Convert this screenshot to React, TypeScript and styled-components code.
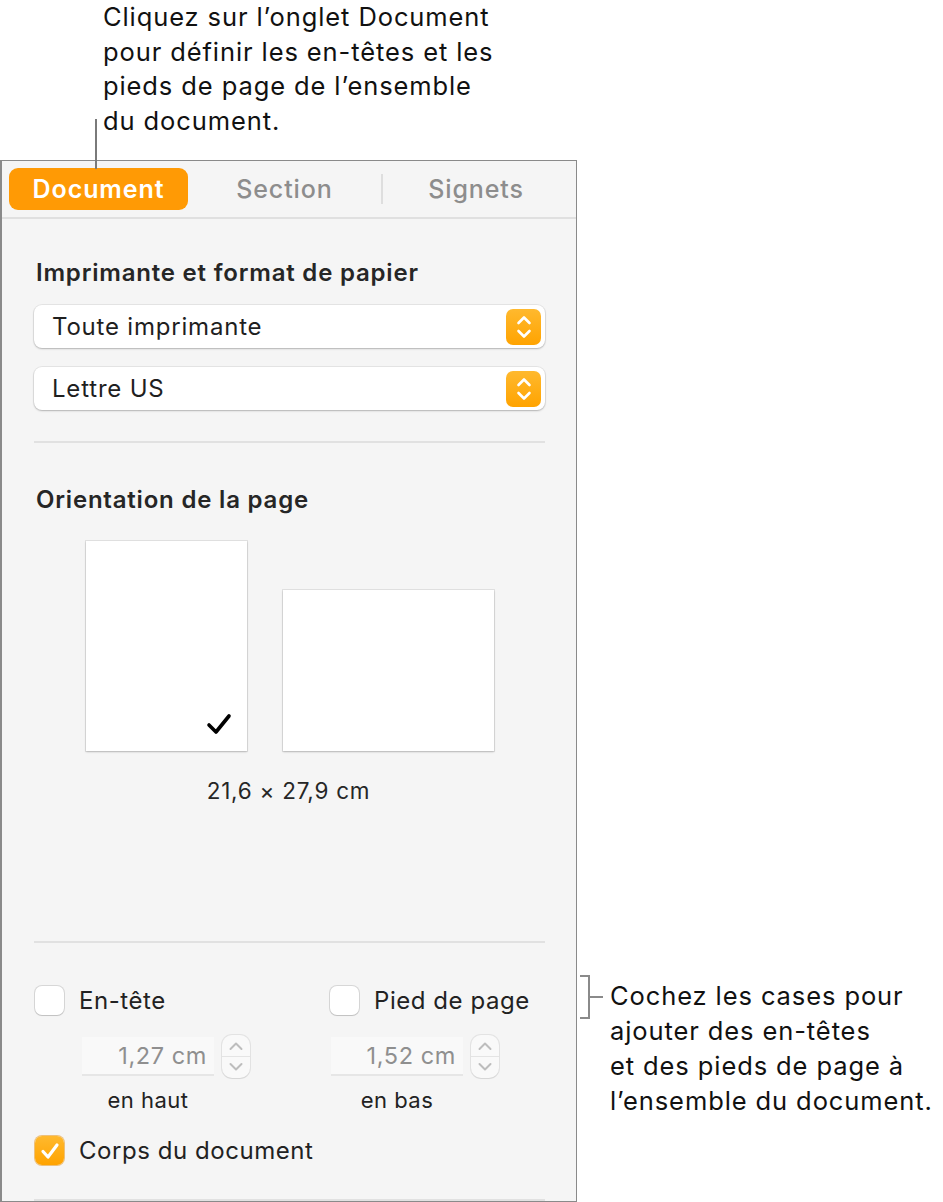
import React from "react";
import styled, { createGlobalStyle } from "styled-components";

const Global = createGlobalStyle`
  html, body { margin: 0; padding: 0; background: #ffffff; }
  body { font-family: Inter, "Noto Sans", "Liberation Sans", sans-serif; color: #1c1c1c; }
  * { box-sizing: border-box; }
`;

const Figure = styled.div`
  position: relative;
  width: 943px;
  height: 1202px;
  overflow: hidden;
  background: #ffffff;
`;

const CalloutText = styled.div<{ $pl?: number }>`
  font-size: 25.5px;
  line-height: 34.6px;
  color: #111;
  letter-spacing: 0.9px;
  padding-left: ${(p) => p.$pl ?? 0}px;
`;

const TopCallout = styled.div`
  height: 160px;
`;

const LeaderLine = styled.div`
  position: absolute;
  left: 95px;
  top: 119px;
  width: 2px;
  height: 50px;
  background: #7a7a7a;
`;

const Row = styled.div`
  display: flex;
  align-items: flex-start;
`;

const Panel = styled.div`
  width: 577px;
  height: 1042px;
  border: 1px solid #8a8a8a;
  border-left-width: 2px;
  background: #f5f5f5;
  display: flex;
  flex-direction: column;
`;

const TabBar = styled.div`
  display: grid;
  grid-template-columns: 179px 193px 2px 1fr;
  align-items: center;
  height: 58px;
  padding: 0 7px 0 7px;
  border-bottom: 2px solid #e0e0e0;
`;

const Tab = styled.div<{ $active?: boolean }>`
  height: 42px;
  display: flex;
  align-items: center;
  justify-content: center;
  font-size: 25px;
  letter-spacing: 0.9px;
  font-weight: ${(p) => (p.$active ? 600 : 500)};
  color: ${(p) => (p.$active ? "#ffffff" : "#8d8d8d")};
  background: ${(p) => (p.$active ? "#ff9a05" : "transparent")};
  border-radius: 9px;
`;

const TabDivider = styled.div`
  height: 30px;
  background: #dedede;
`;

const Body = styled.div`
  flex: 1;
  display: flex;
  flex-direction: column;
  padding: 0 31px 0 32px;
`;

const Heading = styled.div<{ $mt: number }>`
  font-size: 24px;
  font-weight: 600;
  letter-spacing: 0.8px;
  color: #262626;
  margin-top: ${(p) => p.$mt}px;
  line-height: 28px;
  padding-left: 2px;
`;

const Select = styled.div<{ $mt: number }>`
  margin-top: ${(p) => p.$mt}px;
  height: 43px;
  background: #ffffff;
  border-radius: 8px;
  box-shadow: 0 0 0 1px rgba(0, 0, 0, 0.06), 0 1px 2px rgba(0, 0, 0, 0.22);
  display: flex;
  align-items: center;
  justify-content: space-between;
  padding: 0 4px 0 18px;
  font-size: 24px;
  letter-spacing: 0.8px;
  color: #1f1f1f;
`;

const SelectStepper = styled.div`
  width: 35px;
  height: 36px;
  border-radius: 7px;
  background: linear-gradient(#ffb92e, #ffa300);
  display: flex;
  align-items: center;
  justify-content: center;
`;

const Divider = styled.div<{ $mt: number }>`
  margin-top: ${(p) => p.$mt}px;
  height: 2px;
  background: #e1e1e1;
`;

const Pages = styled.div`
  margin-top: 27px;
  display: flex;
  justify-content: center;
  align-items: flex-end;
  gap: 36px;
`;

const Page = styled.div<{ $w: number; $h: number }>`
  position: relative;
  width: ${(p) => p.$w}px;
  height: ${(p) => p.$h}px;
  background: #ffffff;
  box-shadow: 0 0 0 1px rgba(0, 0, 0, 0.08), 0 1px 2px rgba(0, 0, 0, 0.2);
`;

const Check = styled.svg`
  position: absolute;
  right: 15px;
  bottom: 15px;
`;

const Caption = styled.div`
  margin-top: 26px;
  text-align: center;
  font-size: 22.5px;
  letter-spacing: 0.75px;
  color: #262626;
  padding-right: 2px;
`;

const Spacer = styled.div`
  flex: 1;
`;

const OptionsGrid = styled.div`
  margin-top: 43px;
  display: grid;
  grid-template-columns: 295px 1fr;
`;

const OptionCol = styled.div`
  display: flex;
  flex-direction: column;
  align-items: flex-start;
`;

const CheckRow = styled.label<{ $mt?: number }>`
  display: flex;
  align-items: center;
  gap: 15px;
  margin-top: ${(p) => p.$mt ?? 0}px;
  font-size: 24px;
  letter-spacing: 0.55px;
  color: #222;
  padding-left: 1px;
  line-height: 29px;
`;

const Box = styled.span<{ $on?: boolean }>`
  width: 29px;
  height: 29px;
  border-radius: 7px;
  background: ${(p) => (p.$on ? "linear-gradient(#ffb92e, #ffa300)" : "#ffffff")};
  box-shadow: ${(p) =>
    p.$on
      ? "0 0 0 1px rgba(230,140,0,0.5)"
      : "0 0 0 1px rgba(0,0,0,0.12), 0 1px 1px rgba(0,0,0,0.1)"};
  display: flex;
  align-items: center;
  justify-content: center;
`;

const FieldBlock = styled.div<{ $ml: number }>`
  margin-top: 20px;
  margin-left: ${(p) => p.$ml}px;
  display: grid;
  grid-template-columns: 132px 28px;
  column-gap: 8px;
  align-items: center;
`;

const Field = styled.div`
  height: 39px;
  background: #f9f9f9;
  border-bottom: 2px solid #e6e6e6;
  display: flex;
  align-items: center;
  justify-content: flex-end;
  padding-right: 7px;
  font-size: 23.5px;
  letter-spacing: 0.6px;
  color: #8f8f8f;
`;

const MiniStepper = styled.div`
  height: 43px;
  border-radius: 10px;
  background: #f9f9f9;
  box-shadow: 0 0 0 1px rgba(0, 0, 0, 0.07), 0 1px 1px rgba(0, 0, 0, 0.06);
  display: flex;
  flex-direction: column;
  align-items: center;
  justify-content: space-around;
  position: relative;
  &::after {
    content: "";
    position: absolute;
    left: 0;
    right: 0;
    top: 21px;
    height: 1px;
    background: #e4e4e4;
  }
`;

const FieldLabel = styled.div`
  grid-column: 1;
  margin-top: 9px;
  text-align: center;
  font-size: 22px;
  letter-spacing: 0.5px;
  color: #222;
`;

const SideCallout = styled.div`
  margin-top: 814px;
  margin-left: 3px;
  display: flex;
  align-items: flex-start;
`;

const Bracket = styled.div`
  position: relative;
  width: 10px;
  height: 44px;
  margin-top: 1px;
  border: 2px solid #8a8a8a;
  border-left: none;
  &::after {
    content: "";
    position: absolute;
    left: 8px;
    top: 19px;
    width: 15px;
    height: 2px;
    background: #8a8a8a;
  }
`;

const SideText = styled(CalloutText)`
  margin-left: 20px;
  margin-top: 4px;
  line-height: 35px;
`;

const Chevrons = ({ color }: { color: string }) => (
  <svg width={18} height={28} viewBox="0 0 18 28" fill="none">
    <path d="M3.5 10 L9 4.5 L14.5 10" stroke={color} strokeWidth={2.6} strokeLinecap="round" strokeLinejoin="round" />
    <path d="M3.5 18 L9 23.5 L14.5 18" stroke={color} strokeWidth={2.6} strokeLinecap="round" strokeLinejoin="round" />
  </svg>
);

const Chevron = ({ up }: { up?: boolean }) => (
  <svg width={16} height={12} viewBox="0 0 16 12" fill="none">
    <path
      d={up ? "M2.5 9 L8 3.5 L13.5 9" : "M2.5 3 L8 8.5 L13.5 3"}
      stroke="#bdbdbd"
      strokeWidth={2}
      strokeLinecap="round"
      strokeLinejoin="round"
    />
  </svg>
);

const TickWhite = () => (
  <svg width={20} height={18} viewBox="0 0 20 18" fill="none">
    <path d="M3 9.5 L8 15 L17 3" stroke="#fff" strokeWidth={3.2} strokeLinecap="round" strokeLinejoin="round" />
  </svg>
);

const Spin = () => (
  <MiniStepper>
    <Chevron up />
    <Chevron />
  </MiniStepper>
);

export default function App() {
  return (
    <Figure>
      <Global />
      <TopCallout>
        <CalloutText $pl={103}>
          Cliquez sur l’onglet Document
          <br />
          pour définir les en-têtes et les
          <br />
          pieds de page de l’ensemble
          <br />
          du document.
        </CalloutText>
      </TopCallout>
      <LeaderLine />
      <Row>
        <Panel>
          <TabBar>
            <Tab $active>Document</Tab>
            <Tab>Section</Tab>
            <TabDivider />
            <Tab>Signets</Tab>
          </TabBar>
          <Body>
            <Heading $mt={40}>Imprimante et format de papier</Heading>
            <Select $mt={18}>
              <span>Toute imprimante</span>
              <SelectStepper>
                <Chevrons color="#ffffff" />
              </SelectStepper>
            </Select>
            <Select $mt={19}>
              <span>Lettre US</span>
              <SelectStepper>
                <Chevrons color="#ffffff" />
              </SelectStepper>
            </Select>
            <Divider $mt={31} />
            <Heading $mt={43}>Orientation de la page</Heading>
            <Pages>
              <Page $w={161} $h={210}>
                <Check width={26} height={24} viewBox="0 0 26 24" fill="none">
                  <path d="M3 13 L10 20 L23 4" stroke="#000" strokeWidth={3.6} strokeLinecap="round" strokeLinejoin="round" />
                </Check>
              </Page>
              <Page $w={211} $h={161} />
            </Pages>
            <Caption>21,6 × 27,9 cm</Caption>
            <Spacer />
            <Divider $mt={0} />
            <OptionsGrid>
              <OptionCol>
                <CheckRow>
                  <Box />
                  En-tête
                </CheckRow>
                <FieldBlock $ml={48}>
                  <Field>1,27 cm</Field>
                  <Spin />
                  <FieldLabel>en haut</FieldLabel>
                </FieldBlock>
              </OptionCol>
              <OptionCol>
                <CheckRow>
                  <Box />
                  Pied de page
                </CheckRow>
                <FieldBlock $ml={2}>
                  <Field>1,52 cm</Field>
                  <Spin />
                  <FieldLabel>en bas</FieldLabel>
                </FieldBlock>
              </OptionCol>
            </OptionsGrid>
            <CheckRow $mt={23}>
              <Box $on>
                <TickWhite />
              </Box>
              Corps du document
            </CheckRow>
            <Divider $mt={34} />
          </Body>
        </Panel>
        <SideCallout>
          <Bracket />
          <SideText>
            Cochez les cases pour
            <br />
            ajouter des en-têtes
            <br />
            et des pieds de page à
            <br />
            l’ensemble du document.
          </SideText>
        </SideCallout>
      </Row>
    </Figure>
  );
}
